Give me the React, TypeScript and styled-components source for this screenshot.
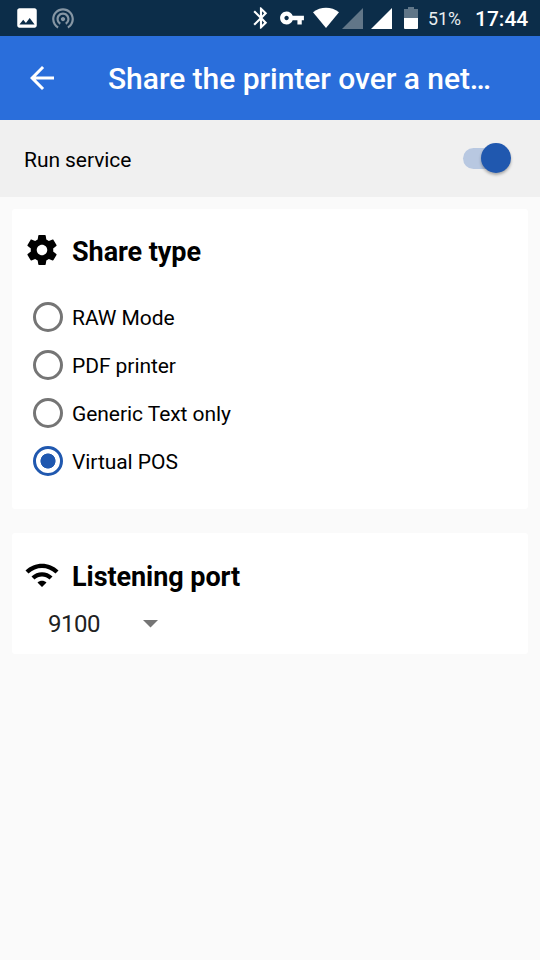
import React, { useState } from "react";
import styled, { createGlobalStyle } from "styled-components";

const GlobalStyle = createGlobalStyle`
  * { box-sizing: border-box; }
  body {
    margin: 0;
    background: #fafafa;
    color: #000;
    font-family: Roboto, "Noto Sans", sans-serif;
  }
`;

const Screen = styled.div`
  display: flex;
  flex-direction: column;
  min-height: 960px;
  background: #fafafa;
`;

const StatusBar = styled.header`
  display: flex;
  align-items: center;
  height: 36px;
  padding: 0 11px 0 14px;
  background: #0c2d49;
  color: #fff;
`;

const Icon = styled.svg<{ $w?: number; $h?: number; $ml?: number }>`
  display: block;
  flex: none;
  width: ${(p) => p.$w ?? 24}px;
  height: ${(p) => p.$h ?? p.$w ?? 24}px;
  margin-left: ${(p) => p.$ml ?? 0}px;
  fill: currentColor;
`;

const StatusGroup = styled.div`
  display: flex;
  align-items: center;
  height: 100%;
`;

const SystemGroup = styled(StatusGroup)`
  margin-left: auto;
`;

const BatteryLevel = styled.span`
  width: 57px;
  padding: 2px 0 0 10px;
  font-size: 17.8px;
  line-height: 36px;
  color: #e9edf0;
`;

const Clock = styled.span`
  width: 54px;
  padding-top: 1px;
  font-size: 21px;
  font-weight: 500;
  line-height: 36px;
  white-space: nowrap;
`;

const AppBar = styled.nav`
  display: flex;
  align-items: center;
  height: 84px;
  padding-left: 24px;
  background: #2a6edb;
  color: #fff;
`;

const BackButton = styled.button`
  width: 36px;
  height: 36px;
  margin-right: 48px;
  padding: 0;
  border: 0;
  background: none;
  color: inherit;
`;

const Title = styled.h1`
  margin: 0;
  padding-top: 1px;
  font-size: 30px;
  font-weight: 500;
  line-height: 36px;
  letter-spacing: -0.04px;
  white-space: nowrap;
`;

const ServiceRow = styled.section`
  display: flex;
  align-items: center;
  justify-content: space-between;
  height: 77px;
  padding: 0 29px 0 24px;
  background: #f0f0f0;
`;

const Label = styled.span`
  padding-top: 2px;
  font-size: 21px;
  line-height: 26px;
  letter-spacing: -0.06px;
`;

const Toggle = styled.button<{ $on: boolean }>`
  display: flex;
  align-items: center;
  justify-content: ${(p) => (p.$on ? "flex-end" : "flex-start")};
  width: 48px;
  height: 21px;
  margin-bottom: 1px;
  padding: 0;
  border: 0;
  border-radius: 11px;
  background: ${(p) => (p.$on ? "#b8c8e1" : "#b5b5b5")};
`;

const Thumb = styled.span<{ $on: boolean }>`
  width: 30px;
  height: 30px;
  border-radius: 50%;
  background: ${(p) => (p.$on ? "#2058af" : "#ececec")};
  box-shadow: 0 2px 3px rgba(0, 0, 0, 0.3);
`;

const Content = styled.main`
  display: flex;
  flex-direction: column;
  gap: 24px;
  padding: 12px;
`;

const Card = styled.section<{ $height: number }>`
  height: ${(p) => p.$height}px;
  padding: 24px 12px 0;
  border-radius: 3px;
  background: #fff;
`;

const CardHeader = styled.div<{ $lift?: number }>`
  display: flex;
  align-items: center;
  gap: 12px;
  height: 36px;
  margin-top: ${(p) => -(p.$lift ?? 0)}px;
  margin-bottom: ${(p) => p.$lift ?? 0}px;
`;

const CardTitle = styled.h2`
  margin: 0;
  padding-top: 3px;
  font-size: 27px;
  font-weight: 700;
  line-height: 32px;
  letter-spacing: -0.06px;
`;

const Options = styled.div`
  display: flex;
  flex-direction: column;
  padding-top: 24px;
`;

const Option = styled.label`
  display: flex;
  align-items: center;
  gap: 9px;
  height: 48px;
  padding-left: 9px;
`;

const Radio = styled.input`
  appearance: none;
  width: 30px;
  height: 30px;
  margin: 0;
  border: 3px solid #757575;
  border-radius: 50%;
  &:checked {
    border-color: #2058af;
    background: radial-gradient(circle, #2058af 7.2px, transparent 7.9px);
  }
`;

const PortSelect = styled.button`
  display: flex;
  align-items: center;
  justify-content: space-between;
  width: 110px;
  height: 36px;
  margin: 13px 0 0 24px;
  padding: 0;
  border: 0;
  background: none;
  color: #212121;
  font: 400 24px Roboto, sans-serif;
  letter-spacing: -0.5px;
`;

const types = ["RAW Mode", "PDF printer", "Generic Text only", "Virtual POS"];

export default function App() {
  const [running, setRunning] = useState(true);
  const [type, setType] = useState("Virtual POS");
  return (
    <Screen>
      <GlobalStyle />
      <StatusBar>
        <StatusGroup>
          <Icon $w={26} viewBox="0 0 24 24">
            <path d="M21 19V5c0-1.1-.9-2-2-2H5c-1.1 0-2 .9-2 2v14c0 1.1.9 2 2 2h14c1.1 0 2-.9 2-2zM8.5 13.5l2.5 3.01L14.5 12l4.5 6H5z" />
          </Icon>
          <Icon $w={26} $ml={10} viewBox="0 0 24 24" opacity={0.5}>
            <path d="M12 11c-1.1 0-2 .9-2 2s.9 2 2 2 2-.9 2-2-.9-2-2-2zm6 2c0-3.31-2.69-6-6-6s-6 2.69-6 6c0 2.22 1.21 4.15 3 5.19l1-1.74c-1.19-.7-2-1.97-2-3.45 0-2.21 1.79-4 4-4s4 1.79 4 4c0 1.48-.81 2.75-2 3.45l1 1.74c1.79-1.04 3-2.97 3-5.19zM12 3C6.48 3 2 7.48 2 13c0 3.7 2.01 6.92 4.99 8.65l1-1.73C5.61 18.53 4 15.96 4 13c0-4.42 3.58-8 8-8s8 3.58 8 8c0 2.96-1.61 5.53-4 6.92l1 1.73c2.99-1.73 5-4.95 5-8.65 0-5.52-4.48-10-10-10z" />
          </Icon>
        </StatusGroup>
        <SystemGroup>
          <Icon $w={26} viewBox="0 0 24 24">
            <path d="M17.71 7.71L12 2h-1v7.59L6.41 5 5 6.41 10.59 12 5 17.59 6.41 19 11 14.41V22h1l5.71-5.71-4.3-4.29 4.3-4.29zM13 5.83l1.88 1.88L13 9.59V5.83zm1.88 10.46L13 18.17v-3.76l1.88 1.88z" />
          </Icon>
          <Icon $w={26} $ml={5} viewBox="0 0 24 24">
            <path d="M12.65 10C11.83 7.67 9.61 6 7 6c-3.31 0-6 2.69-6 6s2.69 6 6 6c2.61 0 4.83-1.67 5.65-4H17v4h4v-4h2v-4H12.65zM7 14c-1.1 0-2-.9-2-2s.9-2 2-2 2 .9 2 2-.9 2-2 2z" />
          </Icon>
          <Icon $w={28} $h={22} $ml={7} viewBox="0 0 28 22">
            <path d="M1 5.2C5 2.1 9.3.7 14 .7s9 1.4 13 4.5L14 21z" />
          </Icon>
          <Icon $w={21} $h={21} $ml={2} viewBox="0 0 21 21" opacity={0.35}>
            <path d="M0 21L21 0v21z" />
          </Icon>
          <Icon $w={21} $h={21} $ml={8} viewBox="0 0 21 21">
            <path d="M0 21L21 0v21z" />
          </Icon>
          <Icon $w={14} $h={22} $ml={12} viewBox="0 0 14 22">
            <path opacity=".35" d="M4 0h6v2h4v9H0V2h4z" />
            <path d="M0 11h14v10q0 1-1 1H1q-1 0-1-1z" />
          </Icon>
          <BatteryLevel>51%</BatteryLevel>
          <Clock>17:44</Clock>
        </SystemGroup>
      </StatusBar>
      <AppBar>
        <BackButton aria-label="Back">
          <Icon $w={36} viewBox="0 0 24 24">
            <path d="M20 11H7.83l5.59-5.59L12 4l-8 8 8 8 1.41-1.41L7.83 13H20v-2z" />
          </Icon>
        </BackButton>
        <Title>Share the printer over a net…</Title>
      </AppBar>
      <ServiceRow>
        <Label>Run service</Label>
        <Toggle $on={running} role="switch" aria-checked={running} aria-label="Run service" onClick={() => setRunning(!running)}>
          <Thumb $on={running} />
        </Toggle>
      </ServiceRow>
      <Content>
        <Card $height={300}>
          <CardHeader $lift={0.6}>
            <Icon $w={36} viewBox="0 0 24 24">
              <path d="M19.43 12.98c.04-.32.07-.64.07-.98s-.03-.66-.07-.98l2.11-1.65c.19-.15.24-.42.12-.64l-2-3.46c-.12-.22-.39-.3-.61-.22l-2.49 1c-.52-.4-1.08-.73-1.69-.98l-.38-2.65C14.46 2.18 14.25 2 14 2h-4c-.25 0-.46.18-.49.42l-.38 2.65c-.61.25-1.17.59-1.69.98l-2.49-1c-.23-.09-.49 0-.61.22l-2 3.46c-.13.22-.07.49.12.64l2.11 1.65c-.04.32-.07.65-.07.98s.03.66.07.98l-2.11 1.65c-.19.15-.24.42-.12.64l2 3.46c.12.22.39.3.61.22l2.49-1c.52.4 1.08.73 1.69.98l.38 2.65c.03.24.24.42.49.42h4c.25 0 .46-.18.49-.42l.38-2.65c.61-.25 1.17-.59 1.69-.98l2.49 1c.23.09.49 0 .61-.22l2-3.46c.12-.22.07-.49-.12-.64l-2.11-1.65zM12 15.5c-1.93 0-3.5-1.57-3.5-3.5s1.57-3.5 3.5-3.5 3.5 1.57 3.5 3.5-1.57 3.5-3.5 3.5z" />
            </Icon>
            <CardTitle>Share type</CardTitle>
          </CardHeader>
          <Options role="radiogroup">
            {types.map((t) => (
              <Option key={t}>
                <Radio type="radio" name="type" checked={t === type} onChange={() => setType(t)} />
                <Label>{t}</Label>
              </Option>
            ))}
          </Options>
        </Card>
        <Card $height={121}>
          <CardHeader>
            <Icon $w={36} viewBox="0 0 24 24">
              <path d="M1 9l2 2c4.97-4.97 13.03-4.97 18 0l2-2C16.93 2.93 7.08 2.93 1 9zm8 8l3 3 3-3c-1.65-1.66-4.34-1.66-6 0zm-4-4l2 2c2.76-2.76 7.24-2.76 10 0l2-2C15.14 9.14 8.87 9.14 5 13z" />
            </Icon>
            <CardTitle>Listening port</CardTitle>
          </CardHeader>
          <PortSelect>
            9100
            <Icon $w={15} $h={8} viewBox="0 0 15 8" color="#757575">
              <path d="M0 0h15L7.5 7.5z" />
            </Icon>
          </PortSelect>
        </Card>
      </Content>
    </Screen>
  );
}
